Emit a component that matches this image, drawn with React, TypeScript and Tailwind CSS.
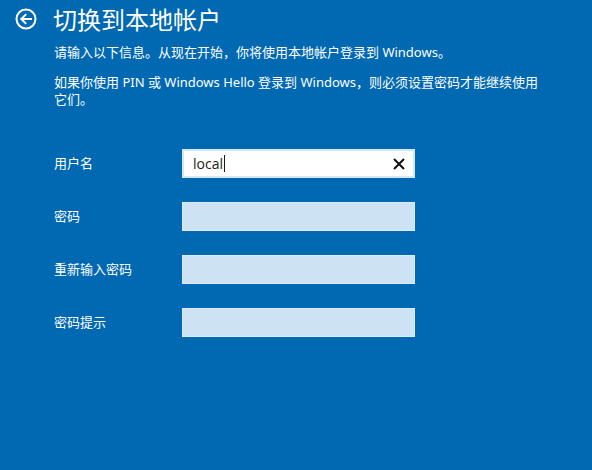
import React from 'react';

const fields = ['用户名', '密码', '重新输入密码', '密码提示'];

const BackIcon = () => (
  <svg width="22" height="22" viewBox="0 0 22 22" fill="none" stroke="white" strokeWidth="2">
    <circle cx="11" cy="11" r="9.5" />
    <path d="M16 11H6.5M10.5 6.8L6.3 11l4.2 4.2" strokeLinecap="square" />
  </svg>
);

const App: React.FC = () => {
  return (
    <div
      className="w-[592px] h-[470px] bg-[#0168b2] text-white overflow-hidden"
      style={{ fontFamily: '"Noto Sans", "Noto Sans CJK SC", sans-serif' }}
    >
      <div className="h-[38px] flex items-center pl-[15px]">
        <BackIcon />
        <h1 className="ml-[16px] text-[24px] leading-[32px] font-normal tracking-[0px]" style={{ fontFamily: '"Noto Sans CJK SC", sans-serif' }}>
          切换到本地帐户
        </h1>
      </div>

      <div className="pl-[54px] text-[13px] leading-[17px] whitespace-nowrap">
        <p className="mt-[6px]">请输入以下信息。从现在开始，你将使用本地帐户登录到 Windows。</p>
        <p className="mt-[13px]">
          如果你使用 PIN 或 Windows Hello 登录到 Windows，则必须设置密码才能继续使用
          <br />
          它们。
        </p>

        <div className="mt-[41px] flex flex-col gap-[24px]">
          {fields.map((label, i) => (
            <div key={label} className="flex items-center">
              <span className="w-[128px] text-[13px]">{label}</span>
              {i === 0 ? (
                <div className="w-[233px] h-[29px] bg-white border-2 border-[#d6e8f6] flex items-center pl-[9px] pr-[8px]">
                  <span className="text-[14px] text-[#1a1a1a]" style={{ fontFamily: '"Open Sans", sans-serif' }}>local</span>
                  <span className="w-[1px] h-[17px] bg-[#1a1a1a] ml-[1px]" />
                  <svg className="ml-auto" width="12" height="12" viewBox="0 0 12 12" stroke="#111" strokeWidth="2">
                    <path d="M1 1l10 10M11 1L1 11" />
                  </svg>
                </div>
              ) : (
                <div className="w-[233px] h-[29px] bg-[#cde2f2] border border-[#dcebf7]" />
              )}
            </div>
          ))}
        </div>
      </div>
    </div>
  );
};

export default App;
